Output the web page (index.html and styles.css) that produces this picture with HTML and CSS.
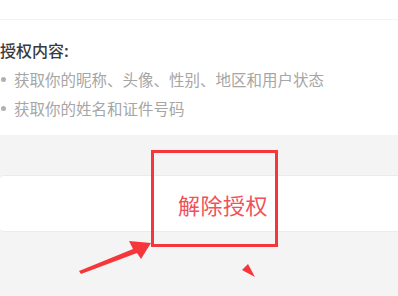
FILE: index.html
```html
<!DOCTYPE html>
<html lang="zh">
<head>
<meta charset="utf-8">
<link rel="stylesheet" href="styles.css">
</head>
<body>
<div class="page">
  <div class="top"></div>
  <div class="section">
    <div class="title">授权内容:</div>
    <ul class="list">
      <li>获取你的昵称、头像、性别、地区和用户状态</li>
      <li>获取你的姓名和证件号码</li>
    </ul>
  </div>
  <div class="card">
    <span class="revoke">解除授权</span>
  </div>
  <div class="highlight"></div>
  <svg class="arrows" width="398" height="296" viewBox="0 0 398 296">
    <polygon points="79,271 133,249 129,241 151,243 141,259 137,253 81,274" fill="#f5363a"/>
    <polygon points="242,270 248,264 255,277" fill="#f5363a"/>
  </svg>
</div>
</body>
</html>
```

FILE: styles.css
```css
html, body {
  margin: 0;
  padding: 0;
}
body {
  background: #f4f4f4;
  font-family: "Noto Sans CJK SC", "Noto Sans", sans-serif;
}
.page {
  position: relative;
  width: 398px;
  height: 296px;
  overflow: hidden;
}
.top {
  height: 19px;
  background: #ffffff;
  border-bottom: 1px solid #f3f3f3;
}
.section {
  background: #ffffff;
  padding: 20px 0 12px 0;
}
.title {
  font-size: 16px;
  line-height: 20px;
  font-weight: 500;
  color: #3a3a3a;
}
.list {
  list-style: none;
  margin: 5px 0 0 0;
  padding: 0;
}
.list li {
  position: relative;
  padding-left: 14px;
  font-size: 15.5px;
  line-height: 29px;
  color: #a6a6a6;
}
.list li::before {
  content: "";
  position: absolute;
  left: 1px;
  top: 12px;
  width: 5px;
  height: 5px;
  border-radius: 50%;
  background: #b0b0b0;
}
.card {
  margin-top: 40px;
  height: 55px;
  background: #ffffff;
  border-top: 1px solid #ebebeb;
  border-bottom: 1px solid #ebebeb;
  border-radius: 4px 0 0 4px;
  display: flex;
  align-items: center;
  padding-left: 178px;
}
.revoke {
  font-size: 22px;
  color: #f0505a;
  letter-spacing: 0.5px;
}
.highlight {
  position: absolute;
  left: 151px;
  top: 150px;
  width: 121px;
  height: 91px;
  border: 3px solid #f5363a;
}
.arrows {
  position: absolute;
  left: 0;
  top: 0;
}
```
